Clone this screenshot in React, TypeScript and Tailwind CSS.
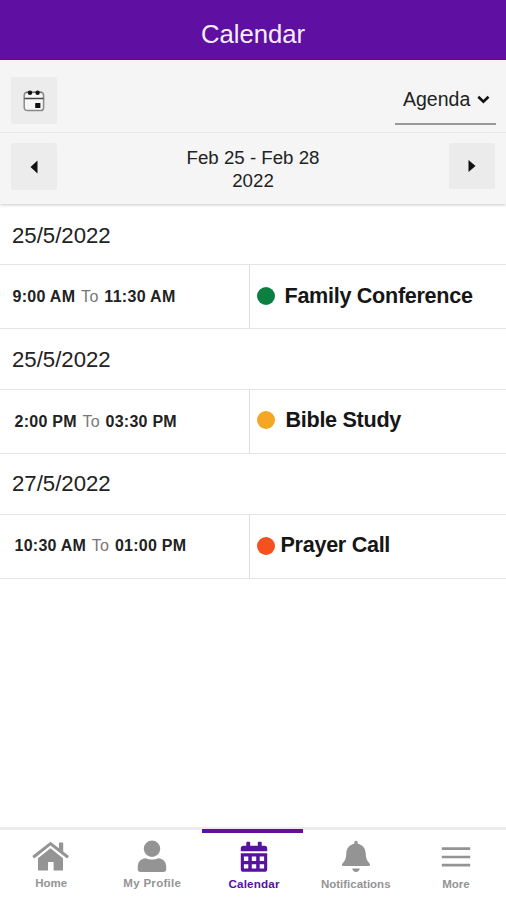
import React from 'react';

const HomeIcon: React.FC = () => (
  <svg width="38" height="32" viewBox="0 0 38 32" fill="currentColor">
    <path d="M27 2.400h4.200v9.800L27 8.800z" />
    <path d="M1.200 17.200 18.500 3.600 36 17.200" fill="none" stroke="currentColor" strokeWidth="3" />
    <path d="M18.500 8.200 31 18.200v11.200c0 .8-.4 1.200-1.200 1.200h-8.200v-8.600h-5.600v8.600H7.200c-.8 0-1.200-.4-1.200-1.200V18.200z" />
  </svg>
);

const ProfileIcon: React.FC = () => (
  <svg width="30" height="32" viewBox="0 0 30 32" fill="currentColor">
    <circle cx="15" cy="8.800" r="8.200" />
    <path d="M9 18.200c2 1 4 1.400 6 1.400s4-.4 6-1.400c5.200 0 8.200 3.600 8.200 8.400v2.600c0 1.700-1.100 2.800-2.800 2.800H3.600C1.900 32 .8 30.900.8 29.200v-2.600c0-4.800 3-8.400 8.200-8.400z" />
  </svg>
);

const CalendarIcon: React.FC = () => (
  <svg width="28" height="32" viewBox="0 0 28 32" fill="currentColor">
    <path d="M3.400 5.700h2.900V2.900c0-.8.4-1.200 1.200-1.200h1.500c.8 0 1.200.4 1.200 1.200v2.800h7.600V2.900c0-.8.4-1.200 1.200-1.200h1.500c.8 0 1.200.4 1.200 1.200v2.800h2.900c1.600 0 2.600 1 2.600 2.600v2.900H.8V8.300c0-1.600 1-2.600 2.600-2.600z" />
    <path
      fillRule="evenodd"
      d="M.8 13.200h26.400v16c0 1.600-1 2.600-2.600 2.600H3.400c-1.600 0-2.600-1-2.600-2.600zM3.900 16.600v4.400h4.400v-4.400zm7.900 0v4.400h4.400v-4.400zm7.900 0v4.400h4.400v-4.400zM3.900 24.200v4.400h4.400v-4.400zm7.900 0v4.400h4.400v-4.400zm7.900 0v4.400h4.400v-4.400z"
    />
  </svg>
);

const BellIcon: React.FC = () => (
  <svg className="ml-[2px]" width="30" height="32" viewBox="0 0 30 32" fill="currentColor">
    <path d="M15 .8c1.100 0 1.700.8 1.700 1.800v1.200c4.800.9 7.700 4.600 8 9.400.2 4.200.7 7.200 3.700 10 1.200 1.100.8 2.700-.8 2.700H2.400c-1.600 0-2-1.600-.8-2.700 3-2.800 3.500-5.800 3.700-10 .3-4.800 3.200-8.500 8-9.400V2.600c0-1 .6-1.800 1.700-1.800z" />
    <path d="M11.200 28.600h7.600c-.4 2.200-1.900 3.400-3.800 3.400s-3.400-1.200-3.800-3.400z" />
  </svg>
);

const MenuIcon: React.FC = () => (
  <svg width="30" height="32" viewBox="0 0 30 32" stroke="currentColor" strokeWidth="2.700">
    <path d="M.8 8.700h28.400M.8 17h28.400M.8 25.200h28.400" />
  </svg>
);

const TodayIcon: React.FC = () => (
  <svg width="22" height="22" viewBox="0 0 22 22" fill="none">
    <rect x="1.200" y="2.200" width="19.400" height="18.400" rx="3.200" fill="#f6f6f6" stroke="#8a8a8a" strokeWidth="1.500" />
    <path d="M1.500 8.500h19" stroke="#444" strokeWidth="1.500" />
    <path d="M3 2.400h16" stroke="#777" strokeWidth="1.400" />
    <circle cx="7" cy="2.700" r="2.200" fill="#111" />
    <circle cx="14.600" cy="2.700" r="2.200" fill="#111" />
    <rect x="12.200" y="12.900" width="5.200" height="5.200" rx=".6" fill="#111" />
  </svg>
);

const events = [
  {
    date: '25/5/2022', from: '9:00 AM', to: '11:30 AM', title: 'Family Conference', dot: 'bg-[#0a8040]',
    head: 'pt-1', time: 'pl-[12.500px] tracking-[0.3px]', label: 'pl-[9.500px]', cell: 'pb-[1px]',
  },
  {
    date: '25/5/2022', from: '2:00 PM', to: '03:30 PM', title: 'Bible Study', dot: 'bg-[#f5a623]',
    head: 'pt-[2px]', time: 'pl-[14.500px] tracking-[0.25px]', label: 'pl-[10.500px]', cell: 'pb-[3px]',
  },
  {
    date: '27/5/2022', from: '10:30 AM', to: '01:00 PM', title: 'Prayer Call', dot: 'bg-[#f4511e]',
    head: '', time: 'pl-[14.500px] pb-px tracking-[0.25px]', label: 'pl-[5.500px]', cell: 'pb-[2px]',
  },
];

const tabs = [
  { label: 'Home', icon: <HomeIcon />, text: 'mt-[3px] text-[11.500px]' },
  { label: 'My Profile', icon: <ProfileIcon />, text: 'mt-[3px] text-[11.500px] tracking-[0.3px]' },
  { label: 'Calendar', icon: <CalendarIcon />, text: 'mt-1 ml-px text-[11.700px] tracking-[0.15px]', active: true },
  { label: 'Notifications', icon: <BellIcon />, text: 'mt-1 ml-[2px] text-[11.500px]' },
  { label: 'More', icon: <MenuIcon />, text: 'mt-1 text-[11.500px]' },
];

const App: React.FC = () => {
  return (
    <div className="flex h-[900px] w-[506px] flex-col overflow-hidden bg-white font-['Liberation_Sans',Arial,sans-serif] text-[#222]">
      <header className="flex h-[60px] shrink-0 items-center justify-center bg-[#5f0fa2] pt-[9px]">
        <h1 className="text-[25.700px] leading-none text-[#f6eefc]">Calendar</h1>
      </header>

      <div className="shrink-0 bg-[#f5f5f5] shadow-[0_1px_3px_rgba(0,0,0,0.22)]">
        <div className="flex h-[73px] items-start justify-between border-b border-[#e6e6e6] pr-[10px] pl-[11px]">
          <button className="mt-[17px] flex h-[47px] w-[46px] items-center justify-center rounded-xs bg-[#ececec]">
            <TodayIcon />
          </button>
          <button className="mt-[17px] flex h-[48px] w-[101px] items-center border-b-2 border-[#999] pb-px pl-2 text-[19.500px]">
            <span>Agenda</span>
            <svg className="ml-[7px]" width="13" height="9" viewBox="0 0 13 9" fill="none" stroke="#111" strokeWidth="2.600">
              <path d="M1.300 1.800 6.400 6.700 11.500 1.800" />
            </svg>
          </button>
        </div>
        <div className="flex h-[71px] items-start justify-between px-[11px]">
          <button className="mt-[10px] flex h-[47px] w-[46px] items-center justify-center rounded-xs bg-[#ececec]">
            <svg width="8" height="14" viewBox="0 0 8 14" fill="#111"><path d="M7.500.5v13L.5 7z" /></svg>
          </button>
          <p className="mt-[13px] text-center text-[18.700px] leading-[23px]">
            Feb 25 - Feb 28
            <br />
            2022
          </p>
          <button className="mt-[10px] flex h-[46px] w-[46px] items-center justify-center rounded-xs bg-[#ebebeb]">
            <svg width="8" height="14" viewBox="0 0 8 14" fill="#111"><path d="M.5 1v12L7.500 7z" /></svg>
          </button>
        </div>
      </div>

      <main className="flex-1">
        {events.map((event, i) => (
          <section key={i}>
            <h2 className={`flex h-[61px] items-center border-b border-[#e4e4e4] pl-[12px] text-[22.200px] ${event.head}`}>{event.date}</h2>
            <div className="flex h-16 border-b border-[#e4e4e4]">
              <div className={`flex w-[250px] items-center border-r border-[#dedede] text-[16px] ${event.time}`}>
                <p className="whitespace-nowrap">
                  <b>{event.from}</b> <span className="mx-px text-[#777]">To</span> <b>{event.to}</b>
                </p>
              </div>
              <div className={`flex items-center pl-[7px] ${event.cell}`}>
                <span className={`size-[18px] rounded-full ${event.dot}`} />
                <strong className={`text-[21.600px] tracking-[-0.300px] text-[#161616] ${event.label}`}>{event.title}</strong>
              </div>
            </div>
          </section>
        ))}
      </main>

      <nav className="flex h-[73px] shrink-0 border-t-3 border-[#ececec]">
        {tabs.map((tab) => (
          <a
            key={tab.label}
            href="#"
            className={`relative flex flex-1 flex-col items-center pt-[10px] pl-px font-bold ${tab.active ? 'text-[#5712a0]' : 'text-[#949494]'}`}
          >
            {tab.active && <span className="absolute -top-[1px] left-0 h-1 w-[101px] bg-[#5f0fa2]" />}
            <span className="flex h-8 items-center">{tab.icon}</span>
            <span className={`leading-4 whitespace-nowrap ${tab.text}`}>{tab.label}</span>
          </a>
        ))}
      </nav>
    </div>
  );
};

export default App;
